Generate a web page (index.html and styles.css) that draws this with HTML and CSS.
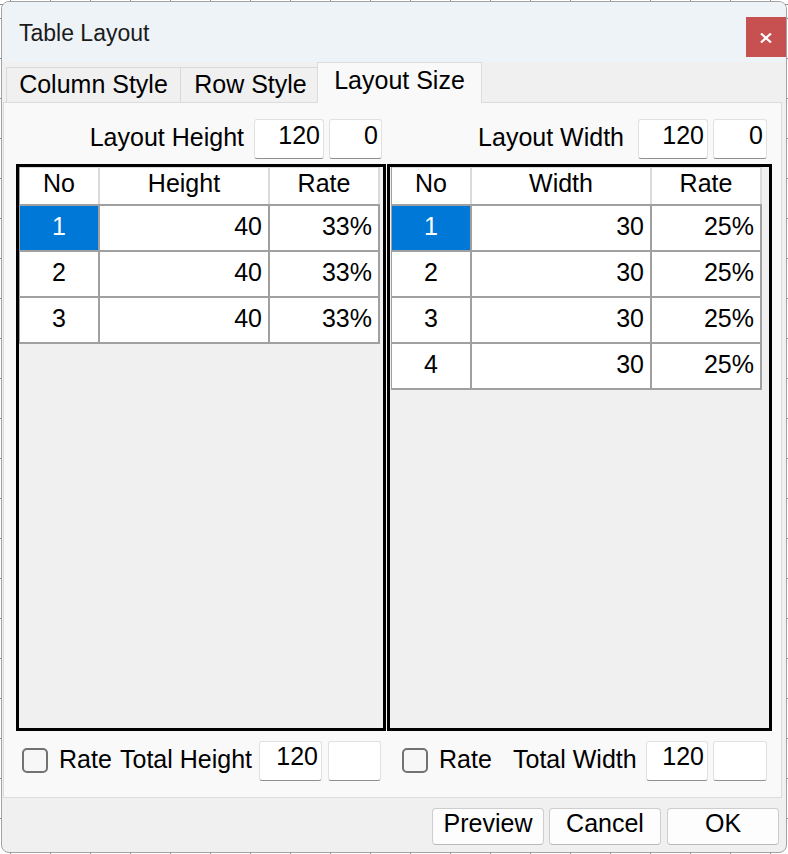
FILE: index.html
```html
<!DOCTYPE html>
<html>
<head>
<meta charset="utf-8">
<link rel="stylesheet" href="styles.css">
</head>
<body>
<div class="window">
  <div class="titlebar">
    <span class="title">Table Layout</span>
    <div class="close">
      <svg width="12" height="10" viewBox="0 0 12 10"><path d="M1 0.5 L11 9.5 M11 0.5 L1 9.5" stroke="#fff" stroke-width="2.2" fill="none"/></svg>
    </div>
  </div>
  <div class="tabs">
    <div class="tab tab-col">Column Style</div>
    <div class="tab tab-row">Row Style</div>
    <div class="tab tab-size active">Layout Size</div>
  </div>
  <div class="panel">
    <div class="cols toprow">
      <div class="field field-l">
        <span class="lbl lbl-h">Layout Height</span>
        <div class="input in-a">120</div>
        <div class="input in-b">0</div>
      </div>
      <div class="field field-r">
        <span class="lbl lbl-w">Layout Width</span>
        <div class="input in-a">120</div>
        <div class="input in-b2">0</div>
      </div>
    </div>
    <div class="cols grids">
      <div class="gridbox">
        <div class="tbl tbl-l">
          <div class="thead">
            <div class="hc">No</div><div class="hc">Height</div><div class="hc">Rate</div>
          </div>
          <div class="tbody">
            <div class="c cn sel">1</div><div class="c cr">40</div><div class="c cr">33%</div>
            <div class="c cn">2</div><div class="c cr">40</div><div class="c cr">33%</div>
            <div class="c cn">3</div><div class="c cr">40</div><div class="c cr">33%</div>
          </div>
        </div>
      </div>
      <div class="gridbox">
        <div class="tbl tbl-r">
          <div class="thead">
            <div class="hc">No</div><div class="hc">Width</div><div class="hc">Rate</div>
          </div>
          <div class="tbody">
            <div class="c cn sel">1</div><div class="c cr">30</div><div class="c cr">25%</div>
            <div class="c cn">2</div><div class="c cr">30</div><div class="c cr">25%</div>
            <div class="c cn">3</div><div class="c cr">30</div><div class="c cr">25%</div>
            <div class="c cn">4</div><div class="c cr">30</div><div class="c cr">25%</div>
          </div>
        </div>
      </div>
    </div>
    <div class="cols bottomrow">
      <div class="brow brow-l">
        <span class="check"></span>
        <span class="blbl rate-l">Rate</span>
        <span class="blbl tot-l">Total Height</span>
        <div class="input bin in-c">120</div>
        <div class="input bin in-b"></div>
      </div>
      <div class="brow brow-r">
        <span class="check"></span>
        <span class="blbl rate-r">Rate</span>
        <span class="blbl tot-r">Total Width</span>
        <div class="input bin in-d">120</div>
        <div class="input bin in-b2"></div>
      </div>
    </div>
  </div>
  <div class="buttons">
    <div class="btn">Preview</div>
    <div class="btn">Cancel</div>
    <div class="btn btn-ok">OK</div>
  </div>
</div>
</body>
</html>
```

FILE: styles.css
```css
html, body {
  margin: 0;
  padding: 0;
}
body {
  width: 788px;
  height: 854px;
  background-color: #ffffff;
  background-image:
    repeating-linear-gradient(to right, #8c8c8c 0 1px, transparent 1px 40px),
    repeating-linear-gradient(to bottom, #8c8c8c 0 1px, transparent 1px 40px);
  background-position: 10px 0, 0 18px;
  font-family: "Liberation Sans", Arial, sans-serif;
  font-size: 25px;
  color: #000;
  overflow: hidden;
}
.window {
  margin: 1px 0 0 1px;
  width: 786px;
  height: 852px;
  box-sizing: border-box;
  border: 1px solid #a3a3a3;
  border-radius: 8px;
  background: #f0f0f0;
  overflow: hidden;
  display: flex;
  flex-direction: column;
}
.titlebar {
  height: 60px;
  flex: none;
  background: #eef3f8;
  display: flex;
  align-items: flex-start;
  justify-content: space-between;
}
.title {
  font-size: 23px;
  line-height: 26px;
  margin: 18px 0 0 17px;
  color: #1b1b1b;
}
.close {
  width: 40px;
  height: 40px;
  margin-top: 15px;
  background: #c75050;
  display: flex;
  align-items: center;
  justify-content: center;
}
.close svg {
  display: block;
  margin-top: 1px;
}
.tabs {
  height: 40px;
  flex: none;
  display: flex;
  align-items: flex-end;
  padding-left: 4px;
}
.tab {
  box-sizing: border-box;
  height: 35px;
  border: 1px solid #d9d9d9;
  border-bottom: none;
  background: #f0f0f0;
  text-align: center;
  line-height: 32px;
  white-space: nowrap;
}
.tab-col { width: 175px; }
.tab-row { width: 138px; margin-left: -1px; padding-left: 3px; }
.tab-size { width: 165px; margin-left: -1px; }
.tab.active {
  height: 41px;
  margin-bottom: -1px;
  background: #f9f9f9;
  border-color: #dcdcdc;
  line-height: 34px;
  position: relative;
  z-index: 1;
}
.panel {
  flex: none;
  box-sizing: border-box;
  width: 779px;
  height: 696px;
  margin-left: 1px;
  border: 1px solid #dcdcdc;
  background: #f9f9f9;
  padding: 16px 0 0 12px;
  display: flex;
  flex-direction: column;
}
.cols {
  display: grid;
  grid-template-columns: 370px 385px;
  column-gap: 1px;
}
.toprow {
  height: 40px;
}
.field {
  display: flex;
  justify-content: flex-end;
  align-items: flex-start;
}
.field-l { padding-right: 4px; }
.field-r { padding-right: 5px; }
.lbl {
  line-height: 36px;
  white-space: nowrap;
}
.lbl-h { margin-right: 10px; }
.lbl-w { margin-right: 14px; }
.input {
  box-sizing: border-box;
  height: 40px;
  background: #ffffff;
  border: 1px solid #e1e1e1;
  border-bottom: 1px solid #8f8f8f;
  border-radius: 3px;
  text-align: right;
  padding-right: 3px;
  line-height: 31px;
}
.in-a { width: 70px; margin-right: 5px; }
.in-b { width: 53px; }
.in-b2 { width: 54px; }
.grids {
  margin-top: 5px;
  height: 567px;
}
.gridbox {
  box-sizing: border-box;
  height: 567px;
  border: 3px solid #000;
  background: #f0f0f0;
}
.tbl {
  border-left: 1px solid #a0a0a0;
  align-self: flex-start;
}
.tbl-l { width: 360px; }
.tbl-r { width: 370px; margin-left: 1px; }
.thead {
  display: grid;
  column-gap: 2px;
  background: #dadada;
  padding: 1px 2px 0 0;
}
.tbody {
  display: grid;
  gap: 2px;
  background: #a0a0a0;
  padding: 2px 2px 2px 0;
}
.tbl-l .thead, .tbl-l .tbody { grid-template-columns: 78px 168px 108px; }
.tbl-r .thead, .tbl-r .tbody { grid-template-columns: 78px 178px 108px; }
.hc {
  height: 36px;
  background: #fff;
  text-align: center;
  line-height: 31px;
}
.c {
  height: 44px;
  background: #fff;
  line-height: 41px;
}
.cn { text-align: center; }
.cr { text-align: right; padding-right: 6px; }
.c.sel {
  background: #0078d7;
  color: #fff;
}
.bottomrow {
  margin-top: 10px;
  height: 40px;
}
.brow {
  display: flex;
  align-items: flex-start;
}
.brow-l { padding-left: 6px; }
.brow-r { padding-left: 15px; }
.check {
  box-sizing: border-box;
  width: 26px;
  height: 25px;
  margin-top: 7px;
  margin-right: 11px;
  border: 2px solid #727272;
  border-radius: 5px;
  background: #f7f7f7;
  flex: none;
}
.blbl {
  line-height: 36px;
  white-space: nowrap;
  flex: none;
}
.rate-l { width: 61px; }
.tot-l { width: 139px; }
.rate-r { width: 74px; }
.tot-r { width: 133px; }
.bin { line-height: 28px; }
.in-c { width: 63px; margin-right: 6px; }
.in-d { width: 62px; margin-right: 5px; }
.buttons {
  display: flex;
  justify-content: flex-end;
  gap: 5px;
  margin-top: 10px;
  padding-right: 7px;
}
.btn {
  box-sizing: border-box;
  width: 112px;
  height: 37px;
  background: #fdfdfd;
  border: 1px solid #cdcdcd;
  border-bottom-color: #b9b9b9;
  border-radius: 4px;
  text-align: center;
  line-height: 29px;
}
.btn-ok { margin-left: 1px; }
```
